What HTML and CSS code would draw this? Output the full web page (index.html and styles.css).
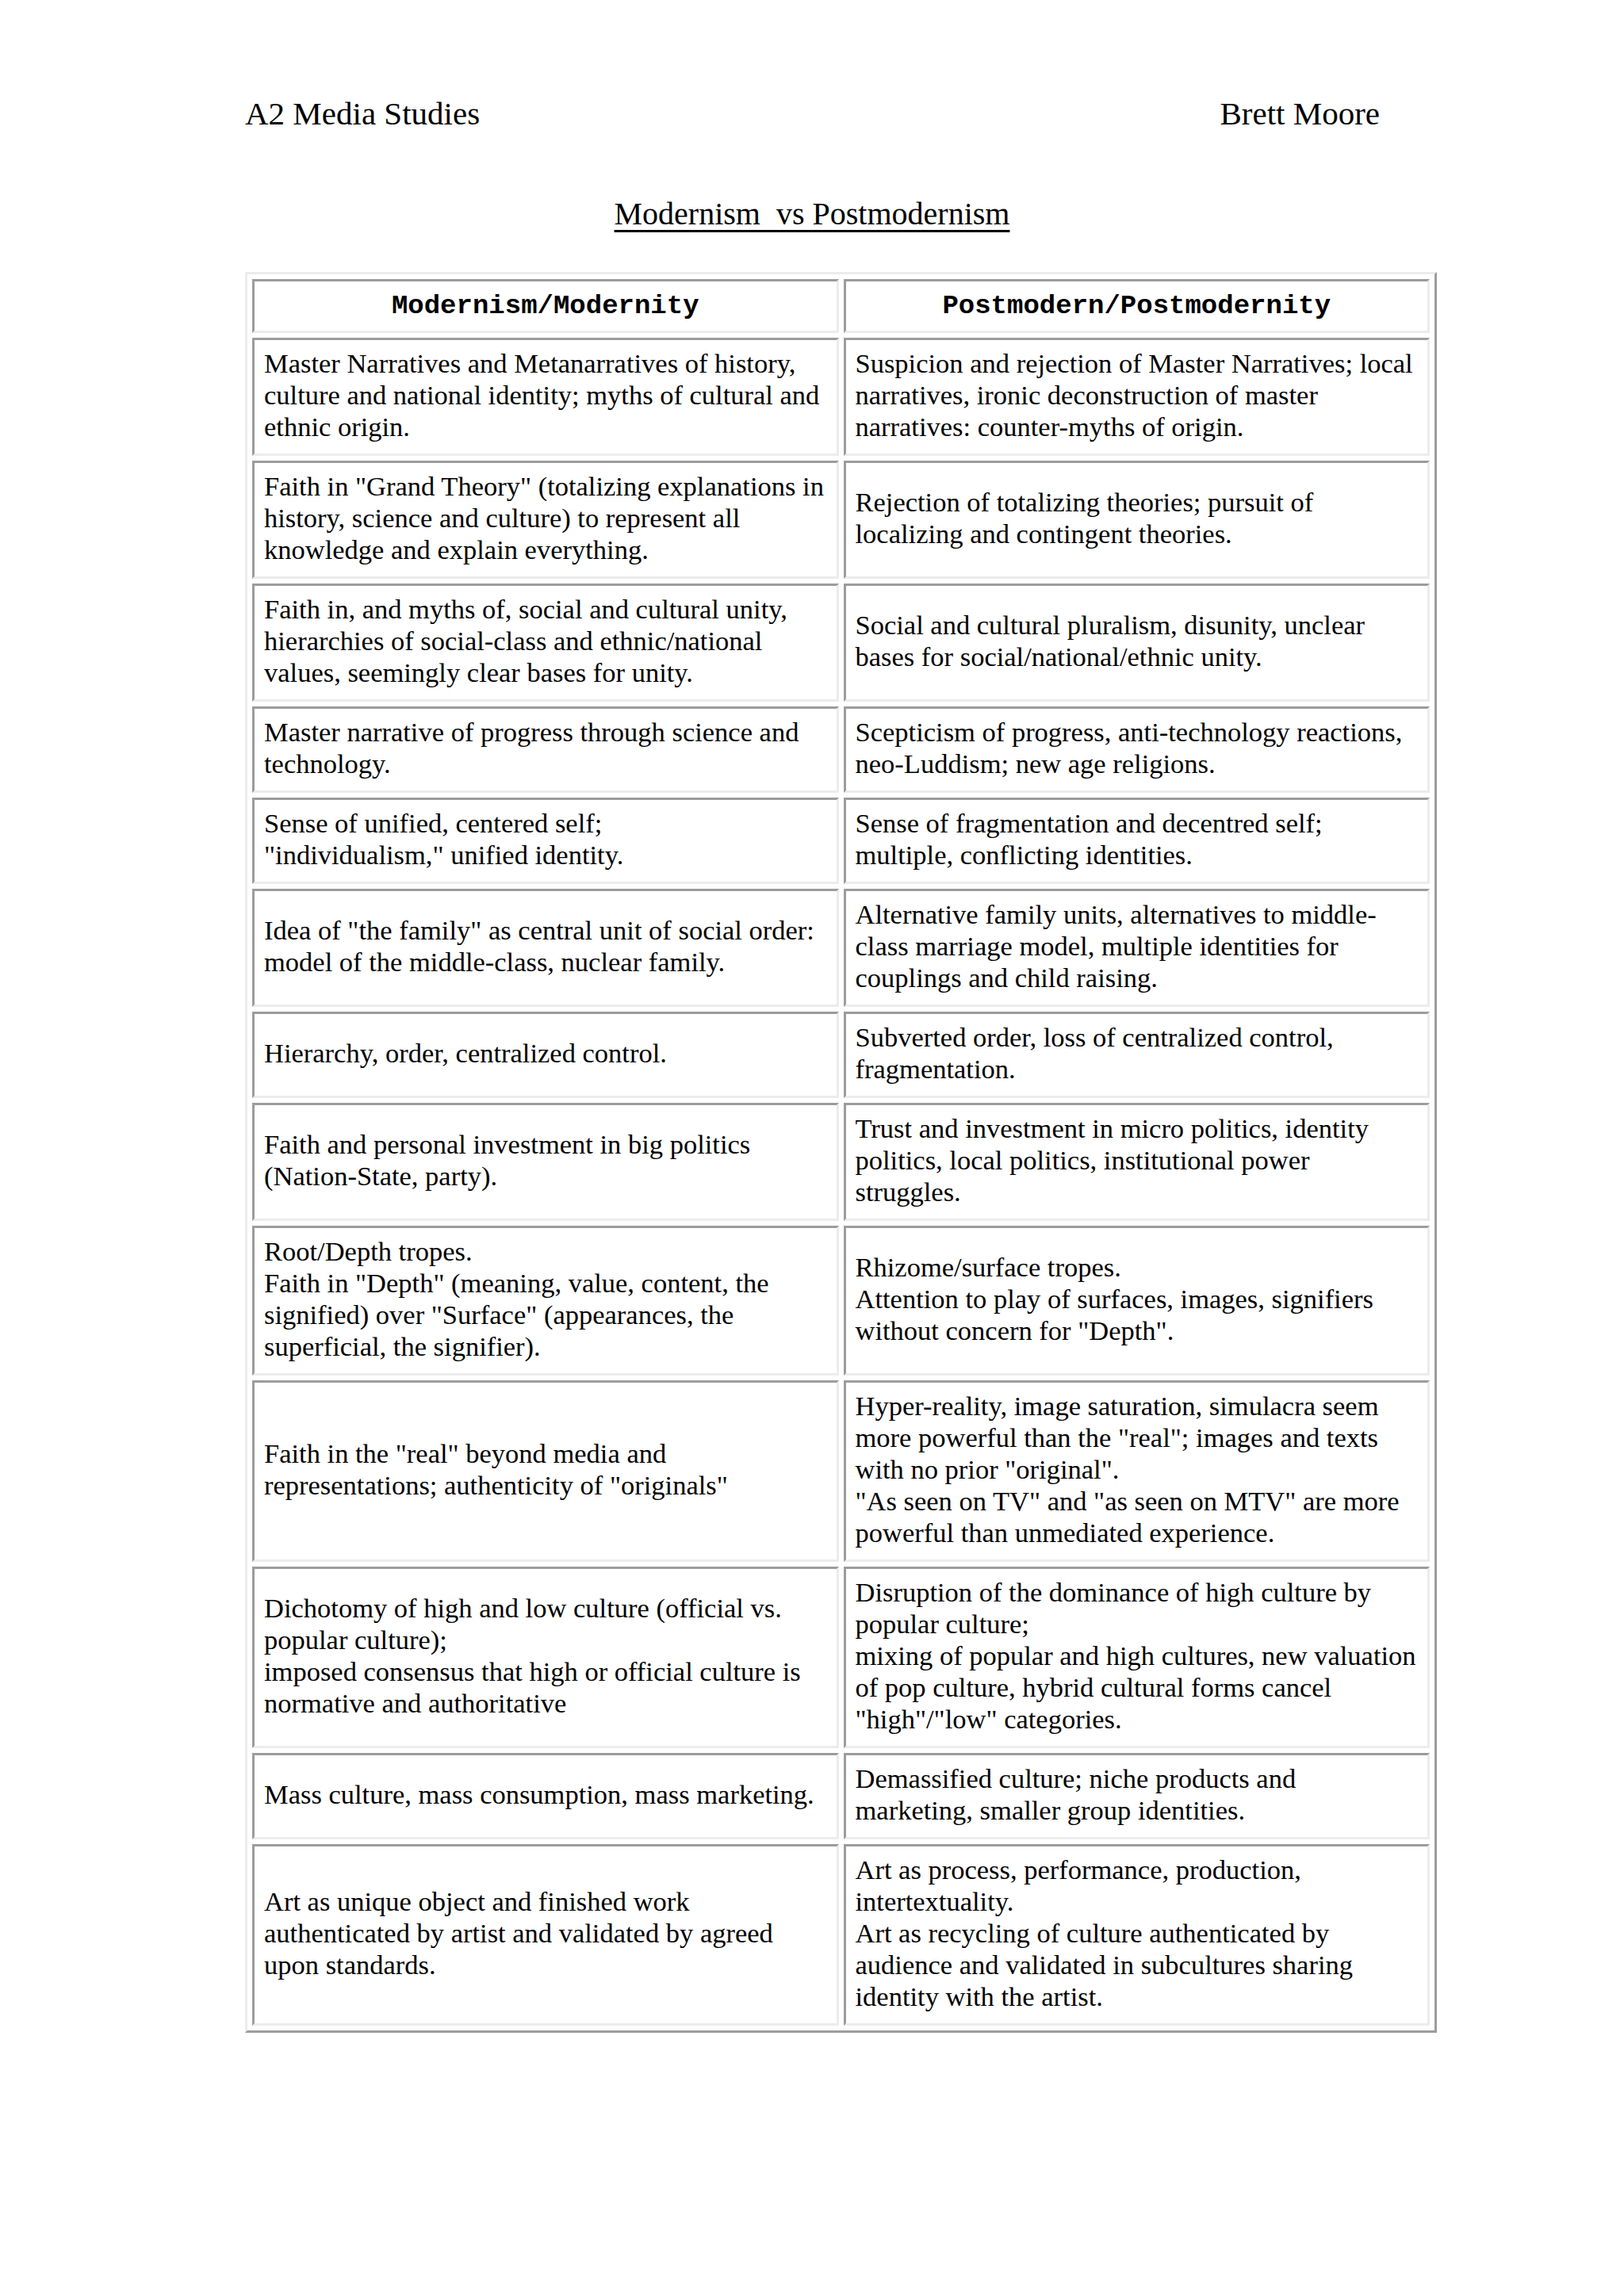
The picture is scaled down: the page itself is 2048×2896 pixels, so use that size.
FILE: index.html
```html
<!DOCTYPE html>
<html lang="en">
<head>
<meta charset="utf-8">
<title>Modernism vs Postmodernism</title>
<link rel="stylesheet" href="styles.css">
</head>
<body>
<div class="page">
  <header class="doc-head">
    <span>A2 Media Studies</span>
    <span>Brett Moore</span>
  </header>
  <h1 class="title">Modernism&nbsp; vs Postmodernism</h1>
  <table class="compare">
    <thead>
      <tr>
        <th>Modernism/Modernity</th>
        <th>Postmodern/Postmodernity</th>
      </tr>
    </thead>
    <tbody>
      <tr>
        <td>Master Narratives and Metanarratives of history,<br>culture and national identity; myths of cultural and<br>ethnic origin.</td>
        <td>Suspicion and rejection of Master Narratives; local<br>narratives, ironic deconstruction of master<br>narratives: counter-myths of origin.</td>
      </tr>
      <tr>
        <td>Faith in "Grand Theory" (totalizing explanations in<br>history, science and culture) to represent all<br>knowledge and explain everything.</td>
        <td>Rejection of totalizing theories; pursuit of<br>localizing and contingent theories.</td>
      </tr>
      <tr>
        <td>Faith in, and myths of, social and cultural unity,<br>hierarchies of social-class and ethnic/national<br>values, seemingly clear bases for unity.</td>
        <td>Social and cultural pluralism, disunity, unclear<br>bases for social/national/ethnic unity.</td>
      </tr>
      <tr>
        <td>Master narrative of progress through science and<br>technology.</td>
        <td>Scepticism of progress, anti-technology reactions,<br>neo-Luddism; new age religions.</td>
      </tr>
      <tr>
        <td>Sense of unified, centered self;<br>"individualism," unified identity.</td>
        <td>Sense of fragmentation and decentred self;<br>multiple, conflicting identities.</td>
      </tr>
      <tr>
        <td>Idea of "the family" as central unit of social order:<br>model of the middle-class, nuclear family.</td>
        <td>Alternative family units, alternatives to middle-<br>class marriage model, multiple identities for<br>couplings and child raising.</td>
      </tr>
      <tr>
        <td>Hierarchy, order, centralized control.</td>
        <td>Subverted order, loss of centralized control,<br>fragmentation.</td>
      </tr>
      <tr>
        <td>Faith and personal investment in big politics<br>(Nation-State, party).</td>
        <td>Trust and investment in micro politics, identity<br>politics, local politics, institutional power<br>struggles.</td>
      </tr>
      <tr>
        <td>Root/Depth tropes.<br>Faith in "Depth" (meaning, value, content, the<br>signified) over "Surface" (appearances, the<br>superficial, the signifier).</td>
        <td>Rhizome/surface tropes.<br>Attention to play of surfaces, images, signifiers<br>without concern for "Depth".</td>
      </tr>
      <tr>
        <td>Faith in the "real" beyond media and<br>representations; authenticity of "originals"</td>
        <td>Hyper-reality, image saturation, simulacra seem<br>more powerful than the "real"; images and texts<br>with no prior "original".<br>"As seen on TV" and "as seen on MTV" are more<br>powerful than unmediated experience.</td>
      </tr>
      <tr>
        <td>Dichotomy of high and low culture (official vs.<br>popular culture);<br>imposed consensus that high or official culture is<br>normative and authoritative</td>
        <td>Disruption of the dominance of high culture by<br>popular culture;<br>mixing of popular and high cultures, new valuation<br>of pop culture, hybrid cultural forms cancel<br>"high"/"low" categories.</td>
      </tr>
      <tr>
        <td>Mass culture, mass consumption, mass marketing.</td>
        <td>Demassified culture; niche products and<br>marketing, smaller group identities.</td>
      </tr>
      <tr>
        <td>Art as unique object and finished work<br>authenticated by artist and validated by agreed<br>upon standards.</td>
        <td>Art as process, performance, production,<br>intertextuality.<br>Art as recycling of culture authenticated by<br>audience and validated in subcultures sharing<br>identity with the artist.</td>
      </tr>
    </tbody>
  </table>
</div>
</body>
</html>
```

FILE: styles.css
```css
html, body {
  margin: 0;
  padding: 0;
  background: #ffffff;
}

body {
  font-family: "Liberation Serif", "Times New Roman", serif;
  color: #000000;
}

.page {
  width: 2048px;
  padding: 120px 0 0 309px;
  box-sizing: border-box;
}

.doc-head {
  display: flex;
  justify-content: space-between;
  width: 1431px;
  font-size: 41px;
  line-height: 47px;
}

.title {
  margin: 80px 0 0 -309px;
  width: 2048px;
  text-align: center;
  font-size: 40px;
  font-weight: normal;
  line-height: 46px;
  text-decoration: underline;
  text-decoration-thickness: 3px;
  text-underline-offset: 7px;
}

.compare {
  margin-top: 50px;
  width: 1503px;
  table-layout: fixed;
  border-collapse: separate;
  border-spacing: 6px;
  border: 3px solid;
  border-color: #ececec #9c9c9c #9c9c9c #ececec;
}

.compare th,
.compare td {
  border: 3px solid;
  border-color: #9c9c9c #ececec #ececec #9c9c9c;
  vertical-align: middle;
  white-space: nowrap;
}

.compare th {
  font-family: "Liberation Mono", "Courier New", monospace;
  font-weight: bold;
  font-size: 34px;
  line-height: 40px;
  padding: 11px 12px;
  text-align: center;
}

.compare td {
  font-size: 34.5px;
  line-height: 40px;
  padding: 9px 12px 14px;
  text-align: left;
}
```
